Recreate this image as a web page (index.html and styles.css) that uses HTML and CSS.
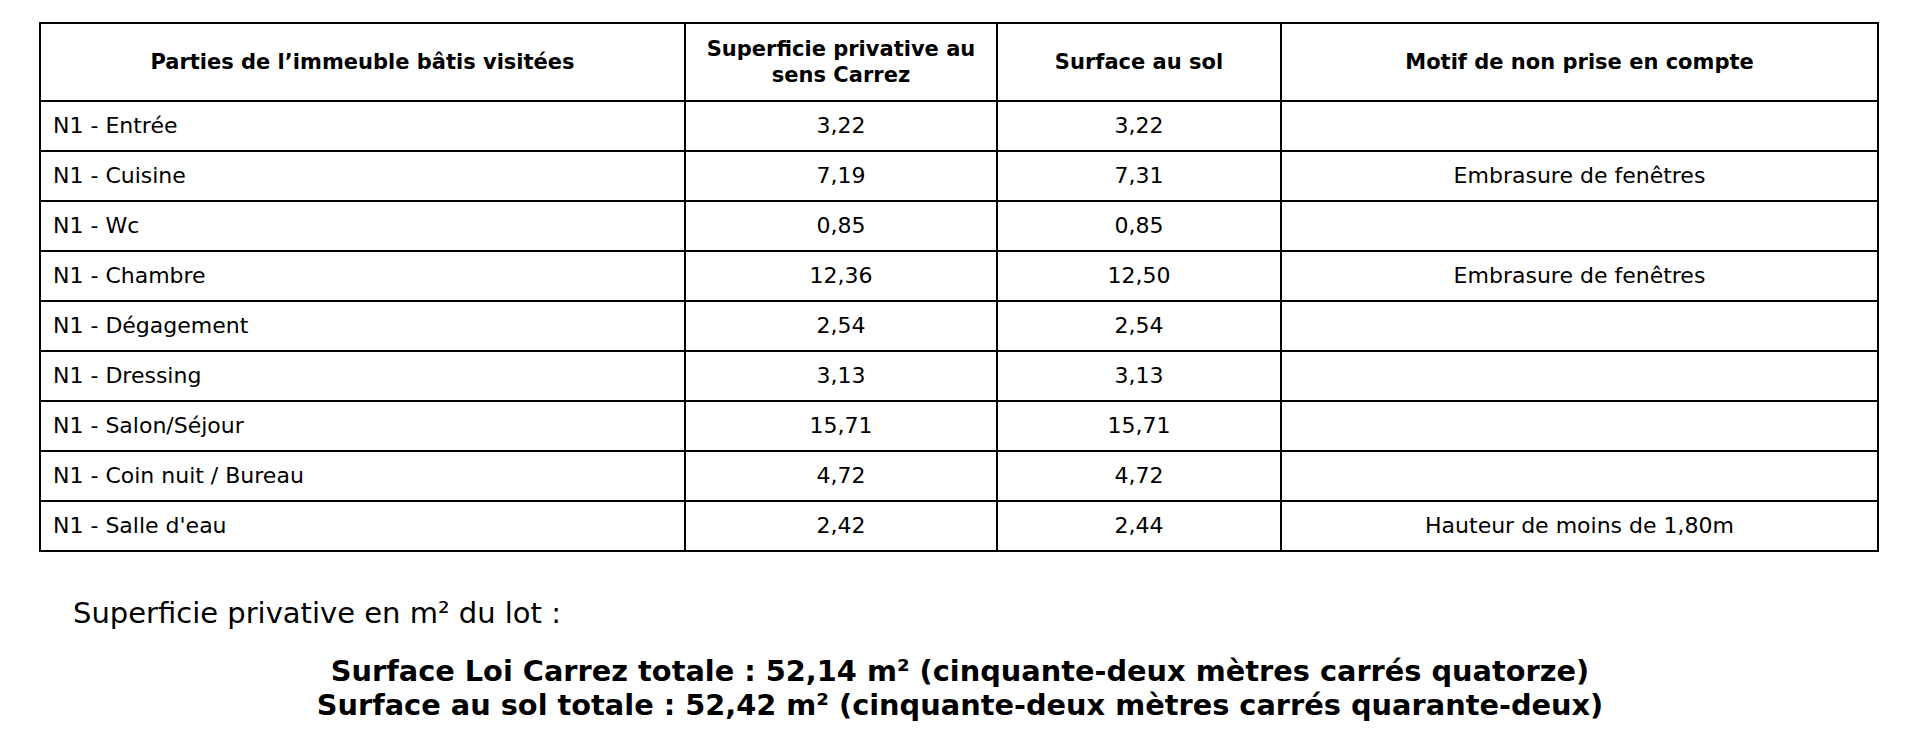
FILE: index.html
```html
<!DOCTYPE html>
<html lang="fr">
<head>
<meta charset="utf-8">
<title>Superficie</title>
<link rel="stylesheet" href="styles.css">
</head>
<body>
<div class="page">
  <table class="surf">
    <colgroup>
      <col class="c1"><col class="c2"><col class="c3"><col class="c4">
    </colgroup>
    <thead>
      <tr>
        <th>Parties de l’immeuble bâtis visitées</th>
        <th>Superficie privative au<br>sens Carrez</th>
        <th>Surface au sol</th>
        <th>Motif de non prise en compte</th>
      </tr>
    </thead>
    <tbody>
      <tr><td class="name">N1 - Entrée</td><td>3,22</td><td>3,22</td><td></td></tr>
      <tr><td class="name">N1 - Cuisine</td><td>7,19</td><td>7,31</td><td>Embrasure de fenêtres</td></tr>
      <tr><td class="name">N1 - Wc</td><td>0,85</td><td>0,85</td><td></td></tr>
      <tr><td class="name">N1 - Chambre</td><td>12,36</td><td>12,50</td><td>Embrasure de fenêtres</td></tr>
      <tr><td class="name">N1 - Dégagement</td><td>2,54</td><td>2,54</td><td></td></tr>
      <tr><td class="name">N1 - Dressing</td><td>3,13</td><td>3,13</td><td></td></tr>
      <tr><td class="name">N1 - Salon/Séjour</td><td>15,71</td><td>15,71</td><td></td></tr>
      <tr><td class="name">N1 - Coin nuit / Bureau</td><td>4,72</td><td>4,72</td><td></td></tr>
      <tr><td class="name">N1 - Salle d'eau</td><td>2,42</td><td>2,44</td><td>Hauteur de moins de 1,80m</td></tr>
    </tbody>
  </table>
  <p class="lot">Superficie privative en m² du lot :</p>
  <div class="totals">
    <p>Surface Loi Carrez totale : 52,14 m² (cinquante-deux mètres carrés quatorze)</p>
    <p>Surface au sol totale : 52,42 m² (cinquante-deux mètres carrés quarante-deux)</p>
  </div>
</div>
</body>
</html>
```

FILE: styles.css
```css
html, body {
  margin: 0;
  padding: 0;
  background: #fff;
}
body {
  font-family: "DejaVu Sans", "Liberation Sans", sans-serif;
  color: #000;
}
.page {
  padding: 22px 0 0 39px;
}
.surf {
  border-collapse: collapse;
  table-layout: fixed;
  width: 1838px;
}
.c1 { width: 645px; }
.c2 { width: 312px; }
.c3 { width: 284px; }
.c4 { width: 597px; }
.surf th, .surf td {
  border: 2px solid #000;
  text-align: center;
  vertical-align: middle;
  padding: 0 12px;
  line-height: 26px;
}
.surf th {
  height: 76px;
  font-weight: bold;
  font-size: 21px;
}
.surf td {
  height: 48px;
  font-size: 22px;
}
.surf td.name {
  text-align: left;
}
.lot {
  margin: 44px 0 0 34px;
  font-size: 29px;
  line-height: 34px;
}
.totals {
  margin: 24px 0 0 -39px;
  text-align: center;
  font-weight: bold;
  font-size: 28.8px;
  line-height: 34px;
}
.totals p {
  margin: 0;
}
```
